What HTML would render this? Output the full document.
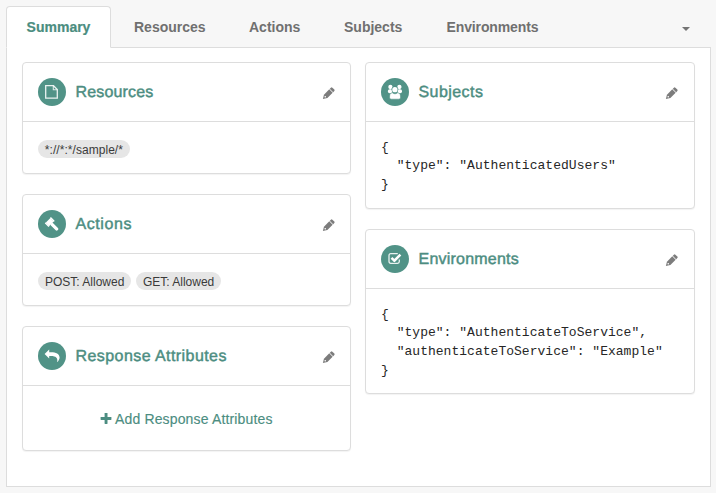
<!DOCTYPE html>
<html>
<head>
<meta charset="utf-8">
<title>Policy Summary</title>
<style>
*{box-sizing:border-box;margin:0;padding:0}
html,body{width:716px;height:493px;overflow:hidden}
body{background:#f7f7f7;font-family:"Liberation Sans",Helvetica,Arial,sans-serif;font-size:14px;color:#333;position:relative}
.tabs{position:absolute;left:6px;top:6px;width:705px;height:42px;border-bottom:1px solid #ddd}
.tab{position:absolute;top:0;height:42px;line-height:42px;font-weight:bold;font-size:14px;color:#707070;white-space:nowrap}
.tab.active{left:0;width:105px;background:#fff;border:1px solid #ddd;border-bottom-color:#fff;border-radius:4px 4px 0 0;color:#4b8d80;-webkit-text-stroke:.2px #4b8d80;text-align:center;line-height:40px}
.caret{position:absolute;left:676px;top:21px;width:0;height:0;border-left:4px solid transparent;border-right:4px solid transparent;border-top:4px solid #747474}
.content{position:absolute;left:6px;top:48px;width:705px;height:439px;background:#fff;border:1px solid #ddd;border-top:none}
.panel{position:absolute;width:329px;background:#fff;border:1px solid #ddd;border-radius:4px;box-shadow:0 1px 1px rgba(0,0,0,.05)}
.panel.r{width:330px}
.ph{height:59px;border-bottom:1px solid #ddd;position:relative}
.circle{position:absolute;left:15px;top:15px;width:28px;height:28px;border-radius:50%;background:#519387}
.circle svg{position:absolute;left:0;top:0;width:28px;height:28px}
.title{position:absolute;left:52.500px;top:0;line-height:59px;font-size:16px;text-rendering:geometricPrecision;color:#4c8d81;-webkit-text-stroke:.45px #4c8d81;white-space:nowrap}
.pencil{position:absolute;left:298px;top:22px;width:16px;height:16px}
.r .pencil{left:298.300px}
.pb{position:relative}
.tag{display:inline-block;vertical-align:top;background:#e6e6e6;border-radius:9px;height:18px;line-height:20px;padding:0 7px;font-size:12px;color:#3a3a3a;margin-right:5px}
pre{font-family:"Liberation Mono",Menlo,monospace;font-size:13px;line-height:19px;color:#262626;letter-spacing:.025px}
pre .l{display:block;height:19px;line-height:19px;white-space:pre}
pre .f{height:18px}
.add{color:#4c8d81;font-size:14px;text-align:left;letter-spacing:.15px;white-space:nowrap;-webkit-text-stroke:.15px #4c8d81}
</style>
</head>
<body>
<svg width="0" height="0" style="position:absolute">
  <defs>
    <g id="pen" transform="translate(1.900 14.100) rotate(-45)">
      <path d="M0 0L3.900-2.400H11.400V2.400H3.900Z" fill="#7c7c7c"/>
      <circle cx="3.300" cy="0" r=".8" fill="#fff"/>
      <rect x="11.400" y="-2.400" width=".8" height="4.800" fill="#c8c8c8"/>
      <path d="M12.200-2.400H13.700Q14.800-2.400 14.800-1.400V1.400Q14.800 2.400 13.700 2.400H12.200Z" fill="#7c7c7c"/>
    </g>
  </defs>
</svg>
<div class="tabs">
  <div class="tab active">Summary</div>
  <div class="tab" style="left:128px">Resources</div>
  <div class="tab" style="left:243px">Actions</div>
  <div class="tab" style="left:338px">Subjects</div>
  <div class="tab" style="left:440.500px;letter-spacing:-.12px">Environments</div>
  <div class="caret"></div>
</div>
<div class="content"></div>

<!-- left column -->
<div class="panel" style="left:22px;top:62px;height:112px">
  <div class="ph">
    <div class="circle"><svg viewBox="0 0 28 28"><path d="M7.700 7.700H15.500L19.300 11.500V20.200H7.700Z" fill="none" stroke="#fff" stroke-opacity=".88" stroke-width="1.300"/><path d="M15.300 7.700V11.700H19.300" fill="none" stroke="#fff" stroke-opacity=".8" stroke-width="1.100"/></svg></div>
    <div class="title" style="letter-spacing:.15px">Resources</div>
    <svg class="pencil" viewBox="0 0 16 16"><use href="#pen"/></svg>
  </div>
  <div class="pb" style="padding:18px 0 0 15px"><span class="tag" style="letter-spacing:.05px;padding:0 7.300px 0 6.800px">*://*:*/sample/*</span></div>
</div>

<div class="panel" style="left:22px;top:194px;height:112px">
  <div class="ph">
    <div class="circle"><svg viewBox="0 0 28 28"><g fill="#fff" transform="translate(11.700 12.100) rotate(45)"><rect x="2" y="-1.600" width="9.400" height="3.200" rx="1.300"/><rect x="-2.400" y="-3" width="4.800" height="6"/><rect x="-2.700" y="2.900" width="5.400" height="1.500" rx=".4"/><rect x="-2.700" y="-4.400" width="5.400" height="1.500" rx=".4"/></g></svg></div>
    <div class="title" style="letter-spacing:.58px">Actions</div>
    <svg class="pencil" viewBox="0 0 16 16"><use href="#pen"/></svg>
  </div>
  <div class="pb" style="padding:18px 0 0 15px"><span class="tag">POST: Allowed</span><span class="tag" style="padding:0 6.500px">GET: Allowed</span></div>
</div>

<div class="panel" style="left:22px;top:326px;height:125px">
  <div class="ph">
    <div class="circle"><svg viewBox="0 0 28 28"><path d="M6.600 12L11.200 7.600V10.200H13C18 10.200 21.600 12 21.600 15.600C21.600 17.300 20.600 18.800 19.500 19.900C19.300 20.100 19.100 19.900 19.200 19.600C19.900 16 18 13.900 13 13.900H11.200V16.500Z" fill="#fff"/></svg></div>
    <div class="title" style="letter-spacing:.43px">Response Attributes</div>
    <svg class="pencil" viewBox="0 0 16 16"><use href="#pen"/></svg>
  </div>
  <div class="pb add" style="padding:25px 0 0 92px"><svg style="position:absolute;left:77px;top:27px" width="12" height="12" viewBox="0 0 12 12"><rect x=".6" y="4.100" width="10.800" height="2.900" rx=".4" fill="#4c8d81"/><rect x="4.600" y=".1" width="2.900" height="10.800" rx=".4" fill="#4c8d81"/></svg>Add Response Attributes</div>
</div>

<!-- right column -->
<div class="panel r" style="left:365px;top:62px;height:147px">
  <div class="ph">
    <div class="circle"><svg viewBox="0 0 28 28"><g fill="#fff"><circle cx="9.400" cy="9" r="2.150"/><circle cx="18.400" cy="9" r="2.150"/><rect x="6.900" y="11.200" width="4.800" height="4" rx="1.800"/><rect x="16.200" y="11.200" width="4.800" height="4" rx="1.800"/><circle cx="13.900" cy="11.700" r="3.250" fill="#519387"/><circle cx="13.900" cy="11.700" r="2.650"/><path d="M8.600 19.500V18C8.600 15.500 10.500 14.800 11.500 14.800C12 15.300 13 15.800 14 15.800C15 15.800 16 15.300 16.500 14.800C17.500 14.800 19.500 15.500 19.500 18V19.500C19.500 20.600 18.700 21.200 17.800 21.200H10.300C9.400 21.200 8.600 20.600 8.600 19.500Z" stroke="#519387" stroke-width=".6"/></g></svg></div>
    <div class="title" style="letter-spacing:.43px">Subjects</div>
    <svg class="pencil" viewBox="0 0 16 16"><use href="#pen"/></svg>
  </div>
  <div class="pb" style="padding:16px 0 0 15px"><pre><span class="l f">{</span><span class="l">  "type": "AuthenticatedUsers"</span><span class="l">}</span></pre></div>
</div>

<div class="panel r" style="left:365px;top:229px;height:165px">
  <div class="ph">
    <div class="circle"><svg viewBox="0 0 28 28"><path d="M16.800 8.700H9.700A1.700 1.700 0 0 0 8 10.400V16.600A1.700 1.700 0 0 0 9.700 18.300H16.600A1.700 1.700 0 0 0 18.300 16.600V14.600" fill="none" stroke="#fff" stroke-opacity=".88" stroke-width="1.300"/><path d="M10.500 12.900L13.400 15.700L19.400 9.600" fill="none" stroke="#519387" stroke-width="3.800"/><path d="M10.500 12.900L13.400 15.700L19.400 9.600" fill="none" stroke="#fff" stroke-width="2.500"/></svg></div>
    <div class="title" style="letter-spacing:.22px">Environments</div>
    <svg class="pencil" viewBox="0 0 16 16"><use href="#pen"/></svg>
  </div>
  <div class="pb" style="padding:16px 0 0 15px"><pre><span class="l f">{</span><span class="l">  "type": "AuthenticateToService",</span><span class="l">  "authenticateToService": "Example"</span><span class="l">}</span></pre></div>
</div>
</body>
</html>
